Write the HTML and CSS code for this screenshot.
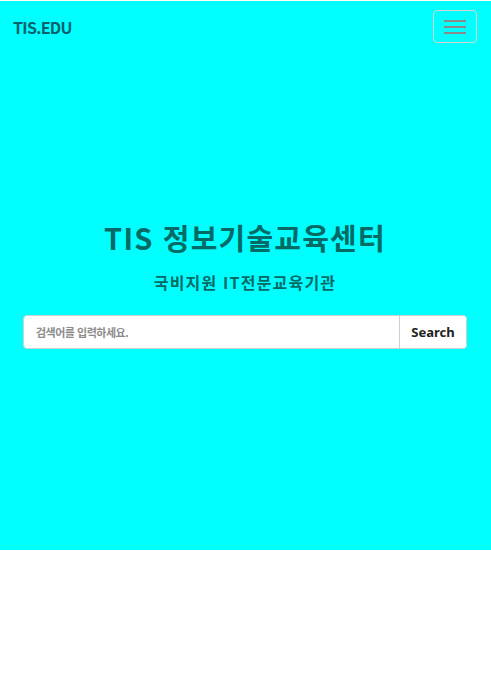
FILE: index.html
```html
<!DOCTYPE html>
<html lang="ko">
<head>
<meta charset="utf-8">
<title>TIS.EDU</title>
<link rel="stylesheet" href="styles.css">
</head>
<body>
<section class="hero">
  <nav class="navbar">
    <a class="brand" href="#">TIS.EDU</a>
    <button class="toggler" type="button" aria-label="menu">
      <span class="bar"></span><span class="bar"></span><span class="bar"></span>
    </button>
  </nav>
  <div class="hero-content">
    <h1 class="title">TIS 정보기술교육센터</h1>
    <p class="subtitle">국비지원 IT전문교육기관</p>
    <form class="search">
      <input class="search-input" type="text" placeholder="검색어를 입력하세요.">
      <button class="search-btn" type="button">Search</button>
    </form>
  </div>
</section>
</body>
</html>
```
FILE: styles.css
```css
html, body {
  margin: 0;
  padding: 0;
  background: #ffffff;
}
body {
  padding-top: 1px;
  font-family: "Noto Sans CJK KR", "Noto Sans", sans-serif;
}
.hero {
  background: #00ffff;
  height: 549px;
  display: flex;
  flex-direction: column;
}
.navbar {
  display: flex;
  justify-content: space-between;
  align-items: center;
  padding: 9px 14px 0 13px;
}
.brand {
  color: #07606b;
  font-weight: 700;
  font-size: 16px;
  text-decoration: none;
  line-height: 1;
  letter-spacing: -0.7px;
}
.toggler {
  width: 44px;
  height: 33px;
  box-sizing: border-box;
  border: 1px solid #d4d4d4;
  border-radius: 4px;
  background: transparent;
  display: flex;
  flex-direction: column;
  align-items: center;
  justify-content: center;
  gap: 4px;
  padding: 0;
}
.bar {
  display: block;
  width: 22px;
  height: 2px;
  background: #8a8a8a;
}
.hero-content {
  padding: 177px 24px 0 23px;
  display: flex;
  flex-direction: column;
  align-items: center;
}
.title {
  margin: 0;
  font-size: 29px;
  line-height: 34px;
  font-weight: 700;
  color: #046a66;
  letter-spacing: 1.2px;
}
.subtitle {
  margin: 19px 0 0;
  font-size: 16px;
  line-height: 19px;
  font-weight: 700;
  color: #046a66;
  letter-spacing: 1.2px;
}
.search {
  margin-top: 23px;
  align-self: stretch;
  display: flex;
  height: 34px;
  box-sizing: border-box;
  border: 1px solid #cfcfcf;
  border-radius: 4px;
  background: #ffffff;
  overflow: hidden;
}
.search-input {
  flex: 1;
  border: none;
  outline: none;
  padding: 0 12px;
  font-family: "Noto Sans CJK KR", "Noto Sans", sans-serif;
  font-size: 11px;
  font-weight: 700;
  letter-spacing: -0.5px;
  color: #333;
  background: transparent;
}
.search-input::placeholder {
  color: #8c8c8c;
}
.search-btn {
  width: 67px;
  border: none;
  border-left: 1px solid #cfcfcf;
  background: #ffffff;
  font-family: "Noto Sans", sans-serif;
  font-size: 13px;
  font-weight: 700;
  color: #222;
  padding: 0;
}
```
